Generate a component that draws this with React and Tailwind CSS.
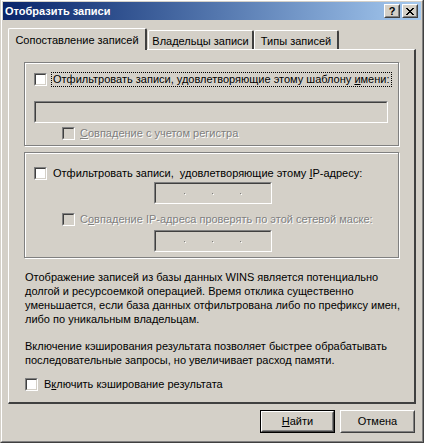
import React from 'react';

const FONT = "font-['Liberation_Sans',Arial,sans-serif]";
const DIS = 'text-[#808080] [text-shadow:1px_1px_0_#fff]';

function Check({ disabled }) {
  return (
    <span className="block w-[13px] h-[13px] shrink-0 border border-t-[#808080] border-l-[#808080] border-r-white border-b-white">
      <span
        className={
          'block w-full h-full border border-t-[#404040] border-l-[#404040] border-r-[#d4d0c8] border-b-[#d4d0c8] ' +
          (disabled ? 'bg-[#d4d0c8]' : 'bg-white')
        }
      />
    </span>
  );
}

function Sunken({ className, children }) {
  return (
    <div className={'border border-t-[#808080] border-l-[#808080] border-r-white border-b-white ' + className}>
      <div className="w-full h-full border border-t-[#404040] border-l-[#404040] border-r-[#d4d0c8] border-b-[#d4d0c8] bg-[#d4d0c8] flex items-center">
        {children}
      </div>
    </div>
  );
}

function IpBox() {
  return (
    <Sunken className="w-[118px] h-[22px] ml-[120px]">
      <div className="flex items-center gap-[27px] ml-[28px]">
        <span className="block w-px h-px bg-[#808080] shadow-[1px_1px_0_#fff]" />
        <span className="block w-px h-px bg-[#808080] shadow-[1px_1px_0_#fff]" />
        <span className="block w-px h-px bg-[#808080] shadow-[1px_1px_0_#fff]" />
      </div>
    </Sunken>
  );
}

function Button({ children, isDefault }) {
  const inner = (
    <div className="w-full h-full border border-t-white border-l-white border-r-[#404040] border-b-[#404040]">
      <div className="w-full h-full border border-t-[#d4d0c8] border-l-[#d4d0c8] border-r-[#808080] border-b-[#808080] flex items-center justify-center">
        {children}
      </div>
    </div>
  );
  return (
    <div className={'w-[75px] h-[23px] ' + (isDefault ? 'border border-black' : '')}>{inner}</div>
  );
}

function CapButton({ children }) {
  return (
    <div className="w-4 h-[14px] border border-t-white border-l-white border-r-[#404040] border-b-[#404040] bg-[#d4d0c8]">
      <div className="w-full h-full border border-t-[#d4d0c8] border-l-[#d4d0c8] border-r-[#808080] border-b-[#808080] flex items-center justify-center">
        {children}
      </div>
    </div>
  );
}

function Tab({ label, selected, className }) {
  return (
    <div
      className={
        'relative flex justify-center border-t border-l border-t-white border-l-white border-r-2 border-r-[#404040] rounded-tl-[2px] rounded-tr-[2px] bg-[#d4d0c8] ' +
        (selected ? 'h-[22px] -mb-px z-10 pt-[5px]' : 'h-[19px] pt-[4px]') +
        ' ' +
        className
      }
    >
      <span className="whitespace-nowrap leading-[13px]">{label}</span>
    </div>
  );
}

export default function App() {
  return (
    <div className={'w-[424px] h-[443px] bg-[#d4d0c8] text-black text-[11px] border-l border-r border-b border-l-[#d4d0c8] border-r-[#404040] border-b-[#404040] ' + FONT}>
      <div className="h-full flex flex-col border border-t-white border-l-white border-r-[#808080] border-b-[#808080] p-px">
        {/* title bar */}
        <div className="h-[18px] shrink-0 flex items-center justify-between bg-gradient-to-r from-[#0a246a] to-[#a6caf0] pl-[2px] pr-[3px]">
          <span className="text-white font-bold leading-none">Отобразить записи</span>
          <div className="flex gap-[2px]">
            <CapButton>
              <span className="font-bold text-[11px] leading-none">?</span>
            </CapButton>
            <CapButton>
              <svg width="8" height="7" viewBox="0 0 8 7" shapeRendering="crispEdges">
                <path d="M0 0h2v1H0zM6 0h2v1H6zM1 1h2v1H1zM5 1h2v1H5zM2 2h4v1H2zM3 3h2v1H3zM2 4h4v1H2zM1 5h2v1H1zM5 5h2v1H5zM0 6h2v1H0zM6 6h2v1H6z" fill="#000" />
              </svg>
            </CapButton>
          </div>
        </div>

        {/* tabs */}
        <div className="mt-[8px] ml-[5px] flex items-end h-[21px]">
          <Tab label="Сопоставление записей" selected className="w-[139px]" />
          <Tab label="Владельцы записи" className="w-[106px] ml-px" />
          <Tab label="Типы записей" className="w-[85px]" />
        </div>

        {/* panel */}
        <div className="ml-[5px] w-[408px] h-[355px] border-t border-l border-t-white border-l-white border-r-2 border-b-2 border-r-[#404040] border-b-[#404040] flex flex-col pt-[12px] px-[15px]">
          {/* group 1 */}
          <div className="h-[84px] border border-[#808080] shadow-[inset_1px_1px_0_#fff,1px_1px_0_#fff] pl-[9px] flex flex-col">
            <div className="mt-[9px] h-[15px] flex items-center">
              <Check />
              <span className="ml-[4px] h-[15px] px-px border border-dotted border-black flex items-center whitespace-nowrap">
                <span>
                  Отфильтровать записи, удовлетворяющие этому шаблону{' '}
                  <u>и</u>мени:
                </span>
              </span>
            </div>
            <Sunken className="mt-[14px] w-[354px] h-[22px]" />
            <div className="mt-[4px] ml-[28px] h-[13px] flex items-center">
              <Check disabled />
              <span className={'ml-[5px] whitespace-nowrap ' + DIS}>
                <u>С</u>овпадение с учетом регистра
              </span>
            </div>
          </div>

          {/* group 2 */}
          <div className="mt-[6px] h-[106px] border border-[#808080] shadow-[inset_1px_1px_0_#fff,1px_1px_0_#fff] pl-[9px] flex flex-col">
            <div className="mt-[13px] h-[15px] flex items-center">
              <Check />
              <span className="ml-[6px] whitespace-nowrap">
                Отфильтровать записи,&nbsp; удовлетворяющие этому <u>I</u>P-адресу:
              </span>
            </div>
            <div className="mt-px">
              <IpBox />
            </div>
            <div className="mt-[8px] ml-[28px] h-[15px] flex items-center">
              <Check disabled />
              <span className={'ml-[5px] whitespace-nowrap ' + DIS}>
                С<u>о</u>впадение IP-адреса проверять по этой сетевой маске:
              </span>
            </div>
            <div className="mt-[3px]">
              <IpBox />
            </div>
          </div>

          <p className="mt-[12px] leading-[14px] whitespace-nowrap pl-px">
            Отображение записей из базы данных WINS является потенциально
            <br />
            долгой и ресурсоемкой операцией. Время отклика существенно
            <br />
            уменьшается, если база данных отфильтрована либо по префиксу имен,
            <br />
            либо по уникальным владельцам.
          </p>
          <p className="mt-[13px] leading-[14px] whitespace-nowrap pl-px">
            Включение кэширования результата позволяет быстрее обрабатывать
            <br />
            последовательные запросы, но увеличивает расход памяти.
          </p>

          <div className="mt-[10px] h-[15px] flex items-center pl-px">
            <Check />
            <span className="ml-[6px] whitespace-nowrap">
              В<u>к</u>лючить кэширование результата
            </span>
          </div>
        </div>

        {/* buttons */}
        <div className="mt-[6px] flex justify-end gap-[5px] pr-[6px]">
          <Button isDefault>
            <span>
              <u>Н</u>айти
            </span>
          </Button>
          <Button>Отмена</Button>
        </div>
      </div>
    </div>
  );
}
